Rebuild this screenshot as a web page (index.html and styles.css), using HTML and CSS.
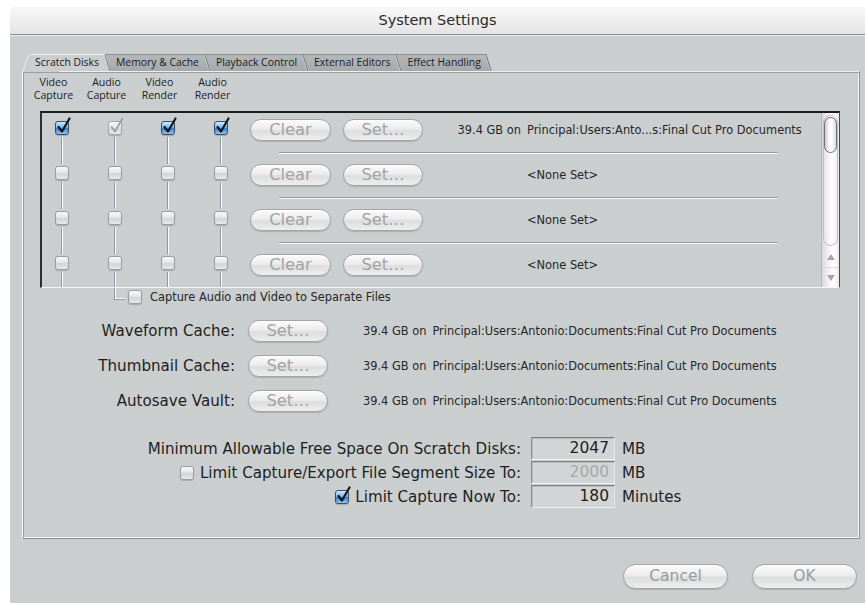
FILE: index.html
```html
<!DOCTYPE html>
<html lang="en">
<head>
<meta charset="utf-8">
<title>System Settings</title>
<link rel="stylesheet" href="styles.css">
</head>
<body>
<div class="window">
  <div class="titlebar">System Settings</div>
  <div class="content">
    <div class="tabs">
      <div class="tab tab-active"><span>Scratch Disks</span></div>
      <div class="tab"><span>Memory &amp; Cache</span></div>
      <div class="tab"><span>Playback Control</span></div>
      <div class="tab"><span>External Editors</span></div>
      <div class="tab"><span>Effect Handling</span></div>
    </div>

    <div class="panel">
      <div class="col-heads">
        <div>Video<br>Capture</div>
        <div>Audio<br>Capture</div>
        <div>Video<br>Render</div>
        <div>Audio<br>Render</div>
      </div>

      <div class="disk-list">
        <div class="disk-rows">
          <div class="disk-row">
            <div class="row-main">
              <div class="checks">
                <span class="cb checked"><svg viewBox="0 0 16 18"><path d="M3.5 10 L7 14.5 L14.5 1.5"/></svg></span>
                <span class="cb checked disabled"><svg viewBox="0 0 16 18"><path d="M3.5 10 L7 14.5 L14.5 1.5"/></svg></span>
                <span class="cb checked"><svg viewBox="0 0 16 18"><path d="M3.5 10 L7 14.5 L14.5 1.5"/></svg></span>
                <span class="cb checked"><svg viewBox="0 0 16 18"><path d="M3.5 10 L7 14.5 L14.5 1.5"/></svg></span>
              </div>
              <button class="btn btn-clear">Clear</button>
              <button class="btn btn-set">Set…</button>
              <span class="size">39.4 GB on</span>
              <span class="path">Principal:Users:Anto...s:Final Cut Pro Documents</span>
            </div>
            <div class="row-sep"></div>
          </div>

          <div class="disk-row">
            <div class="row-main">
              <div class="checks">
                <span class="cb"></span><span class="cb"></span><span class="cb"></span><span class="cb"></span>
              </div>
              <button class="btn btn-clear">Clear</button>
              <button class="btn btn-set">Set…</button>
              <span class="size"></span>
              <span class="path">&lt;None Set&gt;</span>
            </div>
            <div class="row-sep"></div>
          </div>

          <div class="disk-row">
            <div class="row-main">
              <div class="checks">
                <span class="cb"></span><span class="cb"></span><span class="cb"></span><span class="cb"></span>
              </div>
              <button class="btn btn-clear">Clear</button>
              <button class="btn btn-set">Set…</button>
              <span class="size"></span>
              <span class="path">&lt;None Set&gt;</span>
            </div>
            <div class="row-sep"></div>
          </div>

          <div class="disk-row">
            <div class="row-main">
              <div class="checks">
                <span class="cb"></span><span class="cb"></span><span class="cb"></span><span class="cb"></span>
              </div>
              <button class="btn btn-clear">Clear</button>
              <button class="btn btn-set">Set…</button>
              <span class="size"></span>
              <span class="path">&lt;None Set&gt;</span>
            </div>
            <div class="row-sep"></div>
          </div>
        </div>

        <div class="scrollbar">
          <div class="track"><div class="thumb"></div></div>
          <div class="arrow arrow-up"></div>
          <div class="arrow arrow-down"></div>
        </div>
      </div>

      <div class="separate-files">
        <span class="elbow"></span>
        <span class="cb"></span>
        <span class="small">Capture Audio and Video to Separate Files</span>
      </div>

      <div class="caches">
        <span class="label">Waveform Cache:</span>
        <button class="btn btn-set">Set…</button>
        <span class="small"><span class="gb">39.4 GB on</span>Principal:Users:Antonio:Documents:Final Cut Pro Documents</span>

        <span class="label">Thumbnail Cache:</span>
        <button class="btn btn-set">Set…</button>
        <span class="small"><span class="gb">39.4 GB on</span>Principal:Users:Antonio:Documents:Final Cut Pro Documents</span>

        <span class="label">Autosave Vault:</span>
        <button class="btn btn-set">Set…</button>
        <span class="small"><span class="gb">39.4 GB on</span>Principal:Users:Antonio:Documents:Final Cut Pro Documents</span>
      </div>

      <div class="limits">
        <span class="label">Minimum Allowable Free Space On Scratch Disks:</span>
        <span class="field">2047</span>
        <span class="unit">MB</span>

        <span class="label"><span class="cb"></span>Limit Capture/Export File Segment Size To:</span>
        <span class="field field-off">2000</span>
        <span class="unit">MB</span>

        <span class="label"><span class="cb checked"><svg viewBox="0 0 16 18"><path d="M3.5 10 L7 14.5 L14.5 1.5"/></svg></span>Limit Capture Now To:</span>
        <span class="field">180</span>
        <span class="unit">Minutes</span>
      </div>
    </div>

    <div class="actions">
      <button class="btn btn-big">Cancel</button>
      <button class="btn btn-big">OK</button>
    </div>
  </div>
</div>
</body>
</html>
```

FILE: styles.css
```css
:root {
  --bg: #cacecf;
  --ink: #1e1e1e;
  --groove-dark: #8d9193;
  --ui-font: "DejaVu Sans", "Open Sans", sans-serif;
  --narrow-font: "Open Sans", "DejaVu Sans", sans-serif;
}

* { box-sizing: border-box; }

html, body {
  margin: 0;
  padding: 0;
  background: #fff;
  width: 865px;
  height: 603px;
  overflow: hidden;
  font-family: var(--ui-font);
  color: var(--ink);
}

.window {
  margin: 7px 0 0 10px;
  width: 855px;
  height: 596px;
  background: var(--bg);
  border-top-left-radius: 7px;
  overflow: hidden;
}

/* ---------- title bar ---------- */
.titlebar {
  height: 28px;
  line-height: 26px;
  text-align: center;
  font-size: 14.5px;
  color: #2a2a2a;
  background: linear-gradient(#f8f8f8, #ececec 60%, #e4e4e4);
  border-bottom: 1px solid #8e8e8e;
  box-shadow: 0 1px 0 #e9ecec;
}

.content {
  padding: 19px 5px 0 12px;
}

/* ---------- tabs ---------- */
.tabs {
  display: flex;
  height: 17px;
  padding-left: 3px;
  position: relative;
  z-index: 1;
}

.tab {
  position: relative;
  z-index: 0;
  height: 17px;
  padding: 0 9px 0 8px;
  font-family: var(--narrow-font);
  font-size: 10.4px;
  line-height: 17px;
  color: #1a1a1a;
}

.tab::before {
  content: "";
  position: absolute;
  inset: 0;
  z-index: -1;
  background: linear-gradient(#b4b8ba, #a5a9ab);
  border-top: 1px solid #8c9092;
  border-right: 1px solid #6f7375;
  box-shadow: inset -1px 0 0 #c8cccd;
  transform: skewX(17deg);
}

.tab-active {
  padding-left: 10px;
}

.tab-active::before {
  left: 40%;
  background: var(--bg);
  border-top: 1px solid #eef0f0;
  border-right: 1px solid #7c8082;
  box-shadow: none;
}

.tab-active::after {
  content: "";
  position: absolute;
  top: 0;
  bottom: -1px;
  left: 0;
  right: 55%;
  z-index: -1;
  background: var(--bg);
  border-top: 1px solid #eef0f0;
  border-left: 1px solid #f4f5f5;
  border-top-left-radius: 5px;
  transform: skewX(-17deg);
}

/* ---------- tab panel ---------- */
.panel {
  height: 468px;
  border-top: 1px solid #edefef;
  border-left: 1px solid #f6f7f7;
  border-right: 1px solid var(--groove-dark);
  border-bottom: 1px solid var(--groove-dark);
  box-shadow: inset 1px 1px 0 #9a9ea0, inset -1px -1px 0 #f6f7f7;
  padding: 4px 0 0 0;
}

.col-heads {
  display: flex;
  padding-left: 4px;
  font-family: var(--narrow-font);
  font-size: 10.6px;
  line-height: 13px;
}

.col-heads div {
  width: 53px;
  text-align: center;
}

/* ---------- scratch disk list ---------- */
.disk-list {
  display: flex;
  margin: 9px 0 0 17px;
  width: 800px;
  height: 177px;
  border-top: 2px solid #1c1c1c;
  border-left: 2px solid #2e2e2e;
  border-right: 1px solid #4a4a4a;
  border-bottom: 1px solid #f4f5f5;
}

.disk-rows {
  flex: 1;
  overflow: hidden;
  background-image:
    linear-gradient(to right, #9397a0 0 1px, #fdfdfd 1px 2px),
    linear-gradient(to right, #9397a0 0 1px, #fdfdfd 1px 2px),
    linear-gradient(to right, #9397a0 0 1px, #fdfdfd 1px 2px),
    linear-gradient(to right, #9397a0 0 1px, #fdfdfd 1px 2px);
  background-size: 2px 100%;
  background-repeat: no-repeat;
  background-position: 19px 14px, 72px 14px, 125px 14px, 178px 14px;
}

.disk-row {
  height: 45px;
  padding-top: 6px;
}

.row-main {
  display: flex;
  align-items: center;
  height: 22px;
}

.checks {
  display: flex;
  align-self: flex-start;
  gap: 39px;
  width: 208px;
  padding: 2px 0 0 13px;
}

.row-sep {
  margin: 11px 0 0 237px;
  width: 499px;
  height: 2px;
  border-top: 1px solid #979b9d;
  border-bottom: 1px solid #f6f7f7;
}

.size {
  width: 98px;
  text-align: right;
  font-size: 11.4px;
  white-space: nowrap;
  color: #262626;
}

.path {
  margin-left: 6px;
  font-size: 11.4px;
  white-space: nowrap;
  color: #262626;
}

/* ---------- checkboxes ---------- */
.cb {
  position: relative;
  display: inline-block;
  flex: none;
  width: 14px;
  height: 14px;
  border: 1px solid #9a9c9e;
  border-radius: 3px;
  background: linear-gradient(#fafafa, #e2e3e3 50%, #d2d3d4 55%, #e8e9e9);
  box-shadow: 0 1px 1px rgba(0, 0, 0, 0.18), 0 0 0 2px var(--bg);
}

.cb.checked {
  border-color: #3a4b66;
  background: linear-gradient(#d3ebff, #78b6f0 45%, #2f7fd8 55%, #8ec9fa);
}

.cb.checked.disabled {
  border-color: #a5a7a8;
  background: linear-gradient(#f6f6f6, #e3e4e4 50%, #d6d7d7 55%, #e6e7e7);
}

.cb svg {
  position: absolute;
  left: -1px;
  top: -5px;
  width: 16px;
  height: 18px;
  overflow: visible;
}

.cb svg path {
  fill: none;
  stroke: #141414;
  stroke-width: 2.2;
  stroke-linecap: round;
  stroke-linejoin: round;
}

.cb.disabled svg path {
  stroke: #9a9c9d;
  stroke-width: 1.6;
}

/* ---------- aqua buttons ---------- */
.btn {
  flex: none;
  height: 22px;
  padding: 0;
  margin: 0;
  border: 1px solid #a3a5a7;
  border-radius: 11px;
  background: linear-gradient(#fbfbfb, #ececec 45%, #dcdddd 55%, #eeeeee);
  box-shadow: 0 1px 1px rgba(0, 0, 0, 0.15), inset 0 1px 0 #fff;
  font-family: var(--ui-font);
  font-size: 16.3px;
  line-height: 20px;
  color: #a2a4a5;
  text-align: center;
}

.btn-clear {
  width: 81px;
  margin-right: 12px;
}

.btn-set {
  width: 80px;
}

/* ---------- scrollbar ---------- */
.scrollbar {
  width: 18px;
  display: flex;
  flex-direction: column;
  background: linear-gradient(to right, #d9dadb, #f3f3f3 40%, #ffffff 70%, #e7e8e8);
  border-left: 1px solid #b5b7b8;
}

.track {
  flex: 1;
  margin: 2px 1px 1px;
  border: 1px solid #bdbfc0;
  border-radius: 8px;
  background: linear-gradient(to right, #e4e5e5, #ffffff 60%, #f0f0f0);
}

.thumb {
  height: 36px;
  margin: 1px 0 0;
  border: 1px solid #6f7274;
  border-radius: 8px;
  background: linear-gradient(to right, #c9cbcc, #fbfbfb 40%, #ffffff 60%, #d6d8d9);
}

.arrow {
  height: 20px;
  display: flex;
  align-items: center;
  justify-content: center;
}

.arrow::before {
  content: "";
  width: 0;
  height: 0;
  border-left: 4px solid transparent;
  border-right: 4px solid transparent;
}

.arrow-up::before { border-bottom: 6px solid #a4a6a8; }
.arrow-down::before { border-top: 6px solid #a4a6a8; }
.arrow-down { border-top: 1px solid #d8d9da; }

/* ---------- separate files option ---------- */
.separate-files {
  display: flex;
  align-items: center;
  height: 17px;
  padding-left: 91px;
}

.elbow {
  align-self: flex-start;
  width: 11px;
  height: 12px;
  margin-right: 3px;
  border-left: 1px solid #9397a0;
  border-bottom: 1px solid #9397a0;
  box-shadow: inset 1px -1px 0 #fdfdfd;
}

.separate-files .cb {
  margin-right: 8px;
  margin-top: 1px;
}

.small {
  font-size: 11.4px;
  white-space: nowrap;
  color: #262626;
}

.gb {
  margin-right: 6px;
}

/* ---------- cache locations ---------- */
.caches {
  display: grid;
  grid-template-columns: 212px 81px auto;
  grid-auto-rows: 22px;
  column-gap: 13px;
  row-gap: 13px;
  align-items: center;
  margin-top: 15px;
}

.caches .small {
  margin-left: 21px;
}

.label {
  font-size: 15.1px;
  white-space: nowrap;
  display: flex;
  align-items: center;
  justify-content: flex-end;
}

.label .cb {
  margin-right: 6px;
  box-shadow: 0 1px 1px rgba(0, 0, 0, 0.18);
}

/* ---------- limits ---------- */
.limits {
  display: grid;
  grid-template-columns: 498px 84px auto;
  grid-auto-rows: 23px;
  column-gap: 10px;
  row-gap: 1px;
  align-items: center;
  margin-top: 25px;
}

.field {
  height: 23px;
  padding-right: 5px;
  text-align: right;
  font-size: 15.5px;
  line-height: 21px;
  background: #d2d5d6;
  border-top: 1px solid #7b7f81;
  border-left: 1px solid #8e9294;
  border-right: 1px solid #e6e8e8;
  border-bottom: 1px solid #eef0f0;
  box-shadow: inset 1px 1px 0 #b9bcbd;
}

.field-off {
  color: #a6a8aa;
}

.unit {
  margin-left: -3px;
  font-size: 15.1px;
}

/* ---------- dialog buttons ---------- */
.actions {
  display: flex;
  justify-content: flex-end;
  gap: 24px;
  margin-top: 25px;
  padding-right: 3px;
}

.btn-big {
  width: 105px;
  height: 25px;
  border-radius: 13px;
  font-size: 15.5px;
  line-height: 23px;
  color: #9a9c9e;
}
```
